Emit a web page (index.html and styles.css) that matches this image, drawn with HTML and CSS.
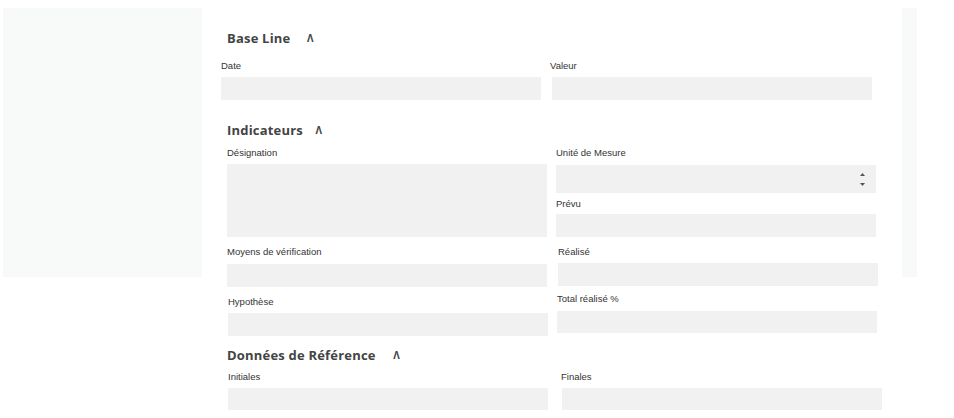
FILE: index.html
```html
<!DOCTYPE html>
<html lang="fr">
<head>
<meta charset="utf-8">
<title>Indicateurs</title>
<link rel="stylesheet" href="styles.css">
</head>
<body>
<div class="page">
  <aside class="side side-left"></aside>
  <main class="main">
    <section class="sec sec-base">
      <h2 class="sec-title">Base Line <span class="caret caret-base">Λ</span></h2>
      <div class="cols">
        <div class="field"><label>Date</label><div class="input"></div></div>
        <div class="field f-valeur"><label>Valeur</label><div class="input"></div></div>
      </div>
    </section>

    <section class="sec sec-ind">
      <h2 class="sec-title">Indicateurs <span class="caret caret-ind">Λ</span></h2>
      <div class="cols">
        <div class="stack stack-left">
          <div class="field"><label>Désignation</label><div class="input textarea"></div></div>
          <div class="field f-moyens"><label>Moyens de vérification</label><div class="input"></div></div>
          <div class="field f-hypo"><label>Hypothèse</label><div class="input"></div></div>
        </div>
        <div class="stack stack-right">
          <div class="field f-unite"><label>Unité de Mesure</label>
            <div class="input select">
              <svg class="spin" width="5" height="13" viewBox="0 0 5 13" aria-hidden="true">
                <path d="M2.5 0 L5 3 L0 3 Z" fill="#555"/>
                <path d="M2.5 13 L5 10 L0 10 Z" fill="#555"/>
              </svg>
            </div>
          </div>
          <div class="field f-prevu"><label>Prévu</label><div class="input"></div></div>
          <div class="field f-realise"><label>Réalisé</label><div class="input"></div></div>
          <div class="field f-total"><label>Total réalisé %</label><div class="input"></div></div>
        </div>
      </div>
    </section>

    <section class="sec sec-ref">
      <h2 class="sec-title">Données de Référence <span class="caret caret-ref">Λ</span></h2>
      <div class="cols">
        <div class="field f-init"><label>Initiales</label><div class="input"></div></div>
        <div class="field f-finales"><label>Finales</label><div class="input"></div></div>
      </div>
    </section>
  </main>
  <aside class="side side-right"></aside>
</div>
</body>
</html>
```

FILE: styles.css
```css
* { box-sizing: border-box; }

html, body {
  margin: 0;
  background: #ffffff;
}

body {
  font-family: "Open Sans", "Noto Sans", sans-serif;
  color: #333;
  overflow: hidden;
}

.page {
  display: flex;
  align-items: flex-start;
  padding: 8px 0 0 3px;
}

.side {
  background: #f8f9f9;
  height: 269px;
  flex: none;
}
.side-left { width: 199px; }
.side-right { width: 15px; }

.main {
  width: 700px;
  flex: none;
}

.sec-title {
  margin: 0;
  font-size: 13px;
  line-height: 18px;
  font-weight: 700;
  letter-spacing: 0.2px;
  color: #444;
  padding-left: 25px;
}

.caret {
  font-size: 10px;
  margin-left: 13px;
  font-weight: 700;
  vertical-align: 1px;
}
.caret-base { margin-left: 13px; }
.caret-ind { margin-left: 9px; }
.caret-ref { margin-left: 14px; }

.field {
  display: flex;
  flex-direction: column;
}

.field label {
  font-family: "Liberation Sans", Arial, sans-serif;
  font-size: 9.5px;
  line-height: 12px;
  color: #333;
  margin-bottom: 5px;
}

.input {
  background: #f1f1f1;
  height: 23px;
  width: 320px;
}

.textarea { height: 73px; }

.select {
  height: 28px;
  display: flex;
  align-items: center;
  justify-content: flex-end;
  padding-right: 11px;
}

.cols {
  display: grid;
  grid-template-columns: 320px 320px;
  align-items: start;
}

/* Base Line */
.sec-base { padding-top: 21px; }
.sec-base .cols {
  margin-top: 13px;
  padding-left: 19px;
  column-gap: 11px;
}
.f-valeur label { margin-left: -2px; }

/* Indicateurs */
.sec-ind { padding-top: 21px; }
.sec-ind .cols {
  margin-top: 8px;
  padding-left: 25px;
  column-gap: 9px;
}
.stack {
  display: flex;
  flex-direction: column;
}
.stack-left { gap: 9px; }
.f-moyens label { margin-bottom: 6px; }
.f-hypo { margin-left: 1px; }

.f-unite label { margin-bottom: 6px; }
.f-prevu { margin-top: 5px; }
.f-prevu label { margin-bottom: 4px; }
.f-realise { margin-top: 9px; margin-left: 2px; }
.f-total { margin-top: 7px; margin-left: 1px; }
.f-total label { margin-bottom: 6px; }
.f-total .input { height: 22px; }

/* Données de Référence */
.sec-ref { padding-top: 10px; }
.sec-ref .cols {
  margin-top: 7px;
  padding-left: 26px;
  column-gap: 14px;
}
.f-init .input, .f-finales .input { height: 22px; }
.f-finales label { margin-left: -1px; }
```
